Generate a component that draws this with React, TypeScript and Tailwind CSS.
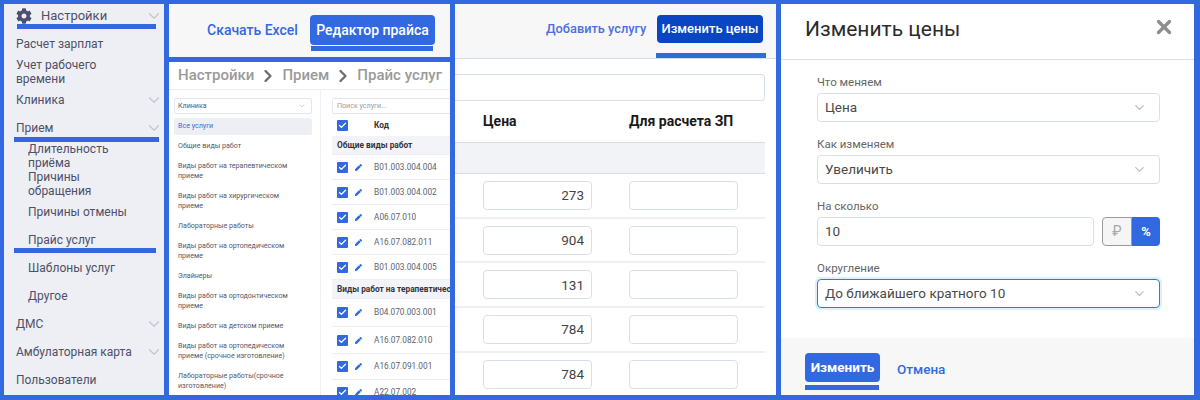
import React from "react"
import { ChevronDown, ChevronRight, Check, X } from "lucide-react"
import { FaCog, FaPen } from "react-icons/fa"

const BLUE = "bg-[#3269e0]"

const Underline = ({ className }: { className: string }) => (
  <div className={`absolute h-[5px] ${BLUE} ${className}`} />
)

const SideRow = ({
  label,
  sub,
  arrow,
}: {
  label: React.ReactNode
  sub?: boolean
  arrow?: boolean
}) => (
  <div className={`flex h-[28px] items-center pr-px ${sub ? "pl-[24px]" : "pl-[12px]"}`}>
    <span className="flex-1 leading-[14px]">{label}</span>
    {arrow ? <ChevronDown size={18} strokeWidth={1.8} className="text-[#c3c8d6]" /> : null}
  </div>
)

function Sidebar() {
  return (
    <div className="relative w-[160px] shrink-0 overflow-hidden bg-[#edeff4] text-[12px] text-[#4d5068]">
      <div className="mb-[2px] flex h-[24px] items-center pl-[12px] pr-px">
        <FaCog size={16} className="mr-[9px] text-[#4c4f70]" />
        <span className="flex-1 text-[13px]">Настройки</span>
        <ChevronDown size={18} strokeWidth={1.8} className="text-[#c3c8d6]" />
      </div>
      <SideRow label="Расчет зарплат" />
      <SideRow label={<>Учет рабочего<br />времени</>} />
      <SideRow label="Клиника" arrow />
      <SideRow label="Прием" arrow />
      <SideRow label={<>Длительность<br />приёма</>} sub />
      <SideRow label={<>Причины<br />обращения</>} sub />
      <SideRow label="Причины отмены" sub />
      <SideRow label="Прайс услуг" sub />
      <SideRow label="Шаблоны услуг" sub />
      <SideRow label="Другое" sub />
      <SideRow label="ДМС" arrow />
      <SideRow label="Амбулаторная карта" arrow />
      <SideRow label="Пользователи" />
      <Underline className="left-[13px] top-[20px] w-[139px]" />
      <Underline className="left-[10px] top-[133px] w-[145px]" />
      <Underline className="left-[10px] top-[244px] w-[142px]" />
    </div>
  )
}

const listItems = [
  "Общие виды работ",
  <>Виды работ на терапевтическом<br />приеме</>,
  <>Виды работ на хирургическом<br />приеме</>,
  "Лабораторные работы",
  <>Виды работ на ортопедическом<br />приеме</>,
  "Элайнеры",
  <>Виды работ на ортодонтическом<br />приеме</>,
  "Виды работ на детском приеме",
  <>Виды работ на ортопедическом<br />приеме (срочное изготовление)</>,
  <>Лабораторные работы(срочное<br />изготовление)</>,
]

type CodeRow = { code?: string; band?: string; h: number }

const codeRows: CodeRow[] = [
  { band: "Общие виды работ", h: 19 },
  { code: "B01.003.004.004", h: 25 },
  { code: "B01.003.004.002", h: 25 },
  { code: "A06.07.010", h: 25 },
  { code: "A16.07.082.011", h: 25 },
  { code: "B01.003.004.005", h: 25 },
  { band: "Виды работ на терапевтическом приеме", h: 19 },
  { code: "B04.070.003.001", h: 28 },
  { code: "A16.07.082.010", h: 27 },
  { code: "A16.07.091.001", h: 26 },
  { code: "A22.07.002", h: 26 },
]

const TinyCheck = () => (
  <span className="flex h-[11px] w-[11px] shrink-0 items-center justify-center rounded-[1px] bg-[#3269e0]">
    <Check size={9} strokeWidth={3.5} className="text-white" />
  </span>
)

const Crumb = () => <ChevronRight size={20} strokeWidth={2.8} className="shrink-0 text-[#6e6e6e]" />

function PricePanel() {
  return (
    <div className="flex w-[281px] shrink-0 flex-col gap-[5px] overflow-hidden">
      <div className="relative flex h-[53px] shrink-0 items-start bg-[#f7f7f7]">
        <span className="ml-[38px] mt-[16px] w-[91px] whitespace-nowrap text-[14px] font-medium text-[#3269e0]">Скачать Excel</span>
        <span className="ml-[12px] mt-[11px] flex h-[30px] w-[125px] items-center justify-center rounded-[4px] bg-[#3269e0] text-[14px] font-medium text-white">
          Редактор прайса
        </span>
        <Underline className="left-[142px] top-[42px] w-[122px]" />
      </div>
      <div className="flex min-h-0 flex-1 flex-col bg-white">
        <div className="flex h-[28px] shrink-0 items-center gap-[4px] whitespace-nowrap border-b border-[#eeeff2] pl-[9px] text-[15px] font-medium text-[#9a9a9a]">
          <span>Настройки</span>
          <Crumb />
          <span>Прием</span>
          <Crumb />
          <span>Прайс услуг</span>
          <Crumb />
        </div>
        <div className="flex min-h-0 flex-1">
          <div className="w-[152px] shrink-0 border-r border-[#eeeff2] pl-[5px] pr-[8px] pt-[8px] text-[7.1px] text-[#55586a]">
            <div className="flex h-[16px] items-center rounded-[2px] border border-[#e4e7ee] pl-[3px] pr-[5px]">
              <span className="flex-1">Клиника</span>
              <ChevronDown size={8} className="text-[#b8bdca]" />
            </div>
            <div className="mt-[4px] flex h-[17px] items-center rounded-[2px] bg-[#edeff4] pl-[4px] text-[#3f6ae0]">
              Все услуги
            </div>
            <div className="mt-px">
              {listItems.map((item, i) => (
                <div key={i} className="py-[5px] pl-[4px] leading-[10px]">
                  {item}
                </div>
              ))}
            </div>
          </div>
          <div className="min-w-0 flex-1 overflow-hidden pl-[11px] pt-[8px]">
            <div className="flex h-[16px] w-[140px] items-center rounded-[2px] border border-[#e4e7ee] pl-[4px] text-[7.1px] text-[#9a9ca6]">
              Поиск услуги...
            </div>
            <div className="flex h-[22px] items-center pl-[5px] pt-px text-[8.3px] font-bold text-[#3b2f2f]">
              <TinyCheck />
              <span className="ml-[26px]">Код</span>
            </div>
            {codeRows.map(row =>
              row.band ? (
                <div
                  key={row.band}
                  style={{ height: row.h }}
                  className="flex w-[140px] items-center whitespace-nowrap border-b border-[#eeeff2] bg-[#f3f4f8] pl-[5px] text-[8.3px] font-bold text-[#33333d]">
                  {row.band}
                </div>
              ) : (
                <div
                  key={row.code}
                  style={{ height: row.h }}
                  className="flex items-center border-b border-[#eeeff2] pl-[5px] text-[8.25px] text-[#5c5f70]">
                  <TinyCheck />
                  <FaPen size={7} className="ml-[7px] text-[#2f6be0]" />
                  <span className="ml-[12px]">{row.code}</span>
                </div>
              ),
            )}
          </div>
        </div>
      </div>
    </div>
  )
}

const prices = ["273", "904", "131", "784", "784"]

function ChangePanel() {
  return (
    <div className="flex w-[321px] shrink-0 flex-col overflow-hidden bg-white">
      <div className="relative flex h-[55px] shrink-0 items-start border-b border-[#d9dfea] bg-[#f7f7f7]">
        <span className="ml-[91px] mt-[15px] w-[100px] whitespace-nowrap text-[12.8px] font-medium text-[#4a6fe0]">Добавить услугу</span>
        <span className="ml-[11px] mt-[11px] flex h-[28px] w-[106px] items-center justify-center rounded-[4px] bg-[#0a45c4] text-[13px] font-medium text-white">
          Изменить цены
        </span>
        <Underline className="left-[201px] top-[49px] w-[110px]" />
      </div>
      <div className="h-[15px] shrink-0" />
      <div className="h-[27px] w-[310px] shrink-0 rounded-r-[4px] border border-l-0 border-[#d9dfea]" />
      <div className="flex h-[41px] shrink-0 items-center text-[14px] font-bold text-[#1a1a1a]">
        <span className="ml-[28px] w-[146px]">Цена</span>
        <span>Для расчета ЗП</span>
      </div>
      <div className="h-[32px] w-[310px] shrink-0 border-y border-[#d9dfea] bg-[#f1f3f7]" />
      {prices.map((price, i) => (
        <div key={i} className="flex h-[44.7px] w-[310px] shrink-0 items-center gap-[37px] border-b-2 border-[#eef0f4] pl-[28px]">
          <div className="flex h-[29px] w-[109px] items-center justify-end rounded-[4px] border border-[#d9dfea] pr-[7px] text-[13.5px] text-[#444]">
            {price}
          </div>
          <div className="h-[29px] w-[109px] rounded-[4px] border border-[#d9dfea]" />
        </div>
      ))}
    </div>
  )
}

const Field = ({ label, children }: { label: string; children: React.ReactNode }) => (
  <div>
    <div className="mb-[4px] h-[15px] pt-px text-[11.5px] leading-[15px] text-[#666]">{label}</div>
    {children}
  </div>
)

const Select = ({ value, focused }: { value: string; focused?: boolean }) => (
  <div
    className={`flex h-[29px] items-center rounded-[4px] border pb-px pl-[7px] pr-[12px] text-[13.5px] text-[#4a4a4a] ${
      focused ? "border-[#1c7ef0] shadow-[0_0_0_2px_#e0eefc]" : "border-[#d9dfea]"
    }`}>
    <span className="flex-1">{value}</span>
    <ChevronDown size={15} strokeWidth={2} className="text-[#b9bdcc]" />
  </div>
)

function Modal() {
  return (
    <div className="flex w-[413px] shrink-0 flex-col overflow-hidden bg-white">
      <div className="flex h-[56px] shrink-0 items-center justify-between border-b border-[#d9dfea] pl-[24px] pr-[19px]">
        <span className="mb-[4px] text-[21px] text-[#2b2b2b]">Изменить цены</span>
        <X size={22} strokeWidth={3.6} className="mb-[10px] text-[#8f8f8f]" />
      </div>
      <div className="flex flex-1 flex-col gap-[14px] pl-[36px] pr-[34px] pt-[14px]">
        <Field label="Что меняем">
          <Select value="Цена" />
        </Field>
        <Field label="Как изменяем">
          <Select value="Увеличить" />
        </Field>
        <Field label="На сколько">
          <div className="flex h-[29px] gap-[8px]">
            <div className="flex flex-1 items-center rounded-[4px] border border-[#d9dfea] pb-px pl-[7px] text-[13.5px] text-[#4a4a4a]">10</div>
            <div className="flex w-[58px]">
              <span className="flex flex-1 items-center justify-center rounded-l-[4px] border border-[#9a9a9a] bg-[#f5f5f5] text-[14px] text-[#a8a8a8]">₽</span>
              <span className="flex flex-1 items-center justify-center rounded-r-[4px] bg-[#3269e0] text-[13px] font-bold text-white">%</span>
            </div>
          </div>
        </Field>
        <Field label="Округление">
          <Select value="До ближайшего кратного 10" focused />
        </Field>
      </div>
      <div className="relative flex h-[57px] shrink-0 items-start bg-[#f7f7f7] pl-[24px] pt-[15px]">
        <span className="flex h-[29px] w-[75px] items-center justify-center rounded-[4px] bg-[#3269e0] text-[13.5px] font-bold text-white">
          Изменить
        </span>
        <span className="ml-[17px] mt-[6px] text-[13.5px] font-medium text-[#3269e0]">Отмена</span>
        <Underline className="left-[24px] top-[47px] w-[74px]" />
      </div>
    </div>
  )
}

export default function App() {
  return (
    <div className={`flex h-[400px] w-[1200px] gap-[5px] overflow-hidden pb-[5px] pl-[4px] pt-[4px] font-['Roboto',sans-serif] ${BLUE}`}>
      <Sidebar />
      <PricePanel />
      <ChangePanel />
      <Modal />
    </div>
  )
}
